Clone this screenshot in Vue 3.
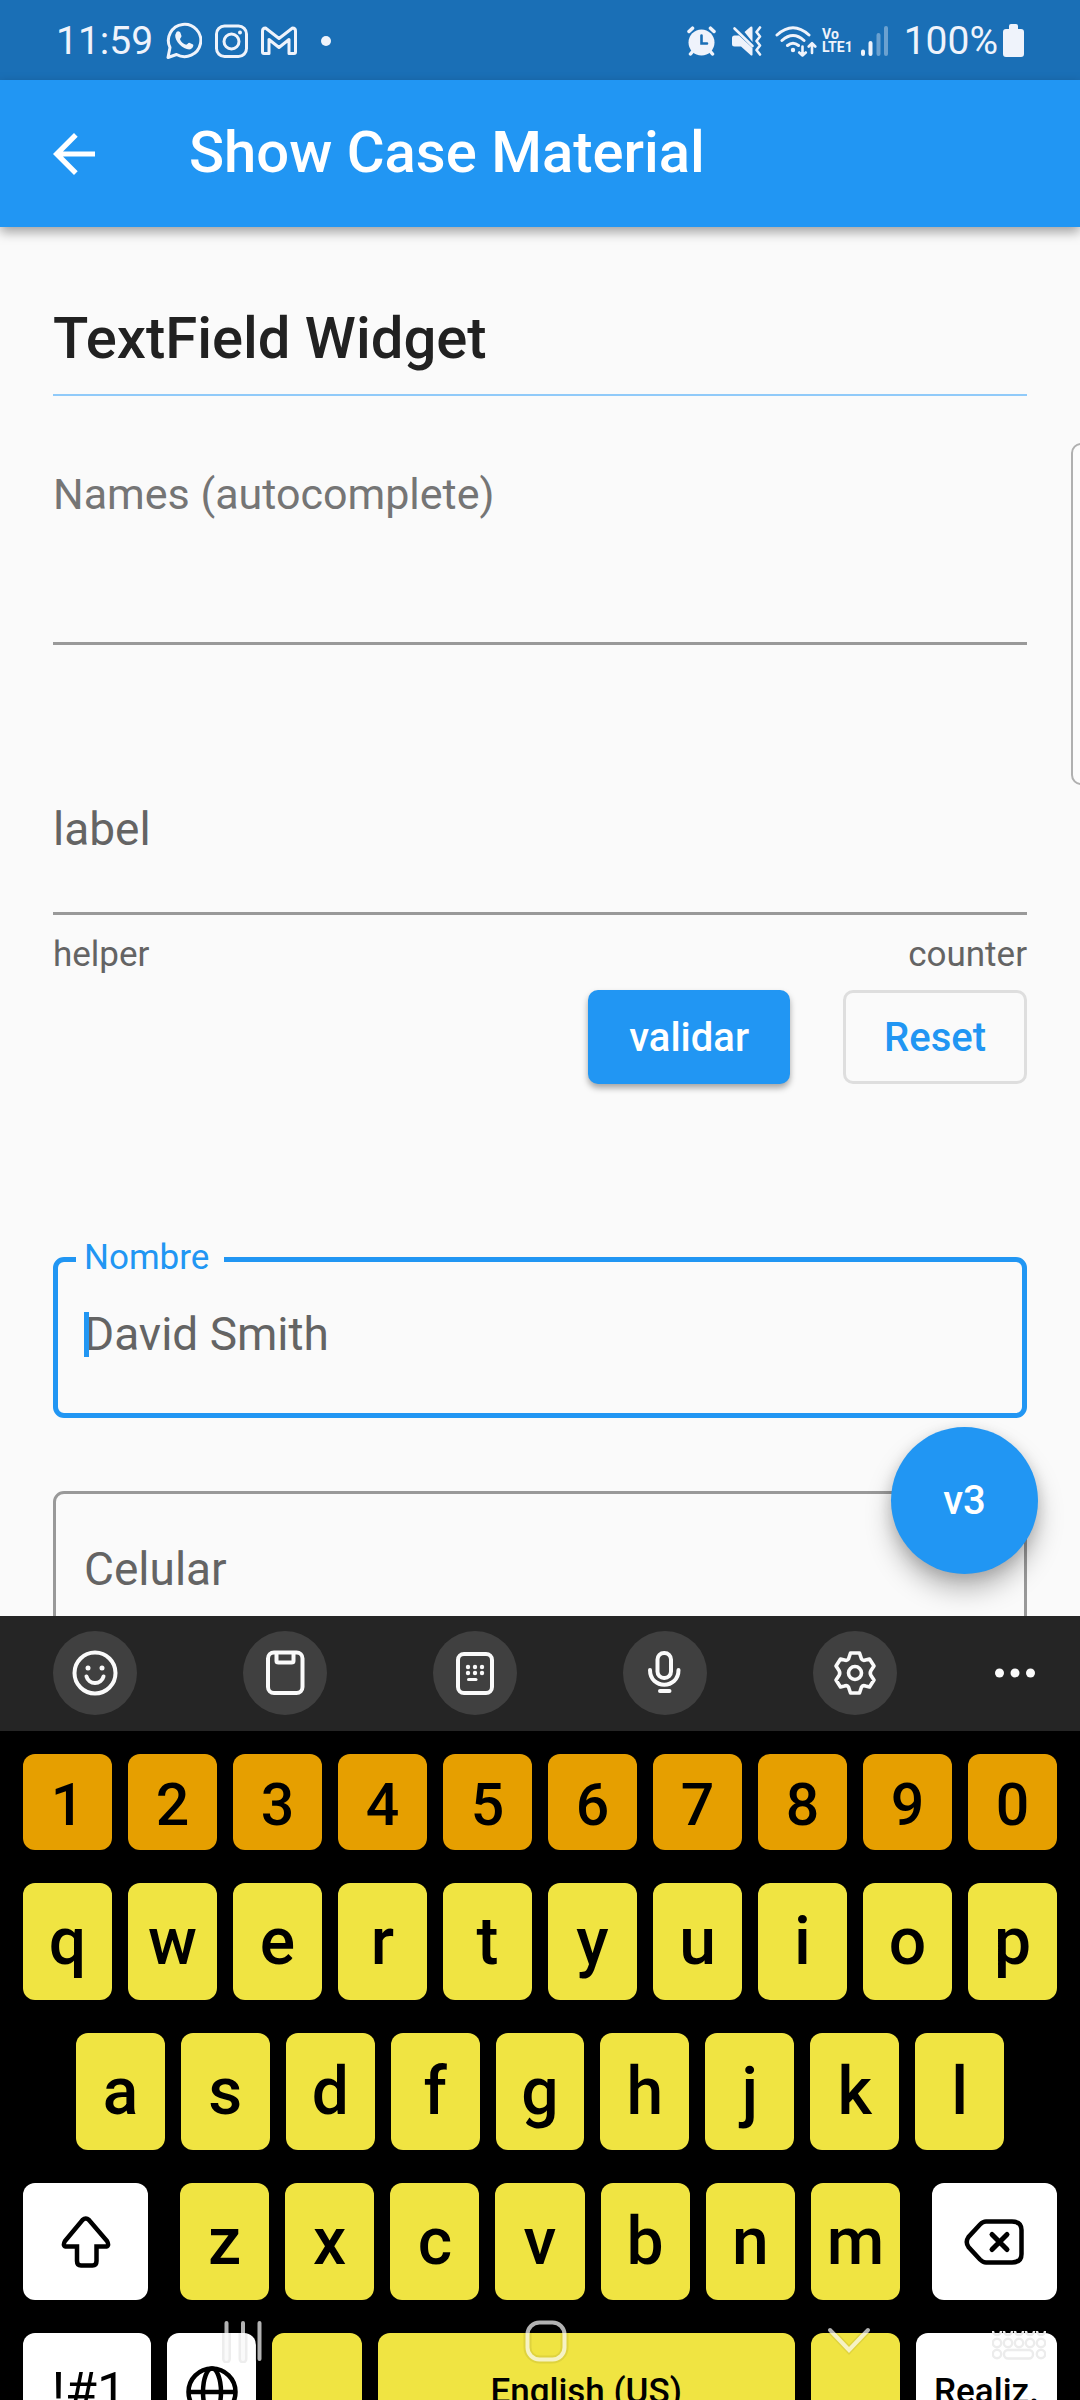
<script setup>
import { ref } from 'vue'

const names = ref('')
const plain = ref('')
const nombre = ref('')
const celular = ref('')

const digits = '1234567890'.split('')
const topRow = 'qwertyuiop'.split('')
const homeRow = 'asdfghjkl'.split('')
const bottomRow = 'zxcvbnm'.split('')
const keyDots = [16, 23, 30]
const navDots = [4, 15, 26, 37, 48]
</script>

<template>
  <div class="screen">
    <header class="status">
      <div class="status-side">
        <time class="status-text">11:59</time>
        <svg class="ml-m" width="36" height="38" viewBox="0 0 36 38" fill="none">
          <path d="M2 35.500 L4 25.500 A16.200 16.200 0 1 1 10.500 32.500 Z" stroke="#eff3fb" stroke-width="3" stroke-linejoin="round" />
          <path d="M10.500 10 C12 8.500 14 9.500 14.500 11 L15.500 14 C15.500 15.500 14 16 14 17.200 C15 20 17.500 22 20.200 22.800 C21.500 22.500 22 20.800 23.300 20.800 L27 22.600 C28 23.800 26.500 26.500 24.500 27.300 C18 28.500 8.500 19.500 9.200 13 Z" fill="#eff3fb" />
        </svg>
        <svg class="ml-m" width="33" height="34" viewBox="0 0 33 34" fill="none" stroke="#eff3fb" stroke-width="3">
          <rect x="1.500" y="2" width="30" height="30.500" rx="8" />
          <circle cx="16.500" cy="17.500" r="7.500" />
          <circle cx="25" cy="8.500" r="2" fill="#eff3fb" stroke="none" />
        </svg>
        <svg class="ml-m" width="36" height="30" viewBox="0 0 36 30" fill="none" stroke="#eff3fb" stroke-width="3" stroke-linejoin="round">
          <path d="M4.500 2 L18 12.500 L31.500 2 Q34.500 2 34.500 5 V26 Q34.500 27.500 33 27.500 H28 V13.500 L18 21.500 L8 13.500 V27.500 H3 Q1.500 27.500 1.500 26 V5 Q1.500 2 4.500 2 Z" />
        </svg>
        <span class="more-dot"></span>
      </div>
      <div class="status-side">
        <svg width="29" height="30" viewBox="0 0 29 30" fill="none" stroke="#eff3fb" stroke-linecap="round">
          <circle cx="14.500" cy="16.500" r="13" fill="#eff3fb" stroke="none" />
          <path d="M2 5.500 L5.500 2.200 M27 5.500 L23.500 2.200 M6 25 L3.500 28 M23 25 L25.500 28" stroke-width="3.500" />
          <path d="M14.500 9.500 V17.500 H20" stroke="#1a6fb6" stroke-width="2.600" />
        </svg>
        <svg class="ml-l" width="30" height="30" viewBox="0 0 30 30" fill="none">
          <path d="M0 12 Q0 9.500 2.500 9.500 H7 L20.500 22 V29 Q19.500 30 18.500 29 L9 20.500 H2.500 Q0 20.500 0 18 Z M12.500 6 L18.500 .800 Q20.500 0 20.500 2 V16 Z" fill="#eff3fb" />
          <path d="M2.500 2.500 L20.500 20" stroke="#eff3fb" stroke-width="2.600" stroke-linecap="round" />
          <path d="M28 1.500 L24.500 6 L28 10.500 L24.500 15 L28 19.500 L24.500 24 L28 28.500" stroke="#eff3fb" stroke-width="2.600" stroke-linecap="round" stroke-linejoin="round" />
        </svg>
        <svg class="ml-m" width="42" height="34" viewBox="0 0 42 34" fill="none" stroke="#eff3fb" stroke-width="3" stroke-linecap="round">
          <path d="M2 11 Q18 -3.500 34 11 M7 16.500 Q18 6.500 29 16.500 M12.500 21.500 Q18 17 23.500 21.500" />
          <circle cx="18" cy="26" r="2.200" fill="#eff3fb" stroke="none" />
          <path d="M27.500 22.500 V31 M24.200 28.500 L27.500 31.500 L30.800 28.500 M37 29 V20 M33.700 22.500 L37 19.200 L40.300 22.500" stroke-width="2.600" stroke-linejoin="round" />
        </svg>
        <span class="volte"><span>Vo</span><span>LTE1</span></span>
        <svg class="ml-s" width="27" height="30" viewBox="0 0 27 30" stroke="#eff3fb" stroke-width="4" stroke-linecap="round">
          <path d="M2 25.500 V28 M9.500 17 V28" />
          <path d="M17.500 9 V28 M25 2 V28" opacity=".38" />
        </svg>
        <span class="status-text ml-l">100%</span>
        <svg class="battery" width="21" height="34" viewBox="0 0 21 34">
          <path d="M6 2 Q6 0 8 0 H13 Q15 0 15 2 V5 H18 Q21 5 21 8 V30 Q21 33 18 33 H3 Q0 33 0 30 V8 Q0 5 3 5 H6 Z" fill="#eff3fb" />
        </svg>
      </div>
    </header>

    <div class="appbar">
      <button class="back" type="button" aria-label="Back">
        <svg width="42" height="42" viewBox="0 0 42 42" fill="#fff">
          <path d="M42 18.400 H10 L24.700 3.700 L21 0 L0 21 L21 42 L24.700 38.300 L10 23.600 H42 Z" />
        </svg>
      </button>
      <h1>Show Case Material</h1>
    </div>

    <main class="content">
      <h2>TextField Widget</h2>

      <div class="names">
        <label for="names">Names (autocomplete)</label>
        <input id="names" v-model="names" type="text" autocomplete="off" />
      </div>

      <div class="lined">
        <label for="plain">label</label>
        <input id="plain" v-model="plain" type="text" />
      </div>
      <div class="hints"><span>helper</span><span>counter</span></div>

      <div class="actions">
        <button class="btn filled" type="button">validar</button>
        <button class="btn outlined" type="button">Reset</button>
      </div>

      <div class="boxed active">
        <label for="nombre">Nombre</label>
        <input id="nombre" v-model="nombre" type="text" placeholder="David Smith" />
        <span class="caret"></span>
      </div>

      <div class="boxed idle">
        <label for="celular">Celular</label>
        <input id="celular" v-model="celular" type="tel" />
      </div>

      <button class="fab" type="button">v3</button>
      <span class="edge-handle"></span>
    </main>

    <section class="keyboard">
      <div class="tools">
        <button type="button" aria-label="Emoji">
          <svg width="46" height="46" viewBox="0 0 46 46" fill="none" stroke="#fafafa" stroke-width="4" stroke-linecap="round">
            <circle cx="23" cy="23" r="20.500" />
            <circle cx="16" cy="18" r="2.500" fill="#fafafa" stroke="none" />
            <circle cx="30" cy="18" r="2.500" fill="#fafafa" stroke="none" />
            <path d="M14.500 26.500 A8.800 8.800 0 0 0 31.500 26.500" />
          </svg>
        </button>
        <button type="button" aria-label="Clipboard">
          <svg width="46" height="46" viewBox="0 0 46 46" fill="none" stroke="#fafafa" stroke-width="4">
            <rect x="6" y="2.500" width="34.500" height="40.500" rx="6" />
            <path d="M14.500 3 V11 Q14.500 12.500 16.500 12.500 H29.500 Q31.500 12.500 31.500 11 V3" />
          </svg>
        </button>
        <button type="button" aria-label="Keyboard layout">
          <svg width="46" height="46" viewBox="0 0 46 46" fill="none" stroke="#fafafa">
            <rect x="6" y="4" width="34" height="39" rx="6" stroke-width="4" />
            <g v-for="x in keyDots" :key="x" fill="#fafafa" stroke="none">
              <circle :cx="x" cy="17" r="2.200" />
              <circle :cx="x" cy="23" r="2.200" />
            </g>
            <path d="M16.500 29.500 H24" stroke-width="3" stroke-linecap="round" />
          </svg>
        </button>
        <button type="button" aria-label="Voice input">
          <svg width="46" height="46" viewBox="0 0 46 46" fill="none" stroke="#fafafa" stroke-width="4" stroke-linecap="round">
            <rect x="15.500" y="3" width="13.500" height="25" rx="6.500" />
            <path d="M8 20 C8 39.500 36.500 39.500 36.500 20 M18 41 H27.500" />
          </svg>
        </button>
        <button type="button" aria-label="Settings">
          <svg width="46" height="46" viewBox="-23 -23 46 46" fill="none" stroke="#fafafa" stroke-width="3.600" stroke-linejoin="round">
            <path d="M-4.500 -20 H4.500 L6.500 -14 Q8 -12 10.500 -13 L14.500 -14 L19 -7 L16 -2.500 Q14.500 0 16 2.500 L19 7 L14.500 14 L10.500 13 Q8 12 6.500 14 L4.500 20 H-4.500 L-6.500 14 Q-8 12 -10.500 13 L-14.500 14 L-19 7 L-16 2.500 Q-14.500 0 -16 -2.500 L-19 -7 L-14.500 -14 L-10.500 -13 Q-8 -12 -6.500 -14 Z" />
            <circle r="6.500" />
          </svg>
        </button>
        <button class="overflow" type="button" aria-label="More">
          <svg width="40" height="10" viewBox="0 0 40 10" fill="#fafafa">
            <circle cx="4.500" cy="5" r="4.500" /><circle cx="20" cy="5" r="4.500" /><circle cx="35.500" cy="5" r="4.500" />
          </svg>
        </button>
      </div>

      <div class="keys">
        <div class="row">
          <button v-for="k in digits" :key="k" class="key digit" type="button">{{ k }}</button>
        </div>
        <div class="row">
          <button v-for="k in topRow" :key="k" class="key" type="button">{{ k }}</button>
        </div>
        <div class="row home">
          <button v-for="k in homeRow" :key="k" class="key" type="button">{{ k }}</button>
        </div>
        <div class="row">
          <button class="key fn shift" type="button" aria-label="Shift">
            <svg width="50" height="52" viewBox="0 0 50 52" fill="none" stroke="#000" stroke-width="4.500">
              <path d="M21.500 4 Q24.800 1 28 4 L46 25 Q49 30.500 44 30.500 H35.500 V45 Q35.500 49.500 31.500 49.500 H20 Q16 49.500 16 45 V30.500 H6 Q1 30.500 4 25 Z" />
            </svg>
          </button>
          <button v-for="k in bottomRow" :key="k" class="key" type="button">{{ k }}</button>
          <button class="key fn erase" type="button" aria-label="Backspace">
            <svg width="60" height="46" viewBox="0 0 60 46" fill="none" stroke="#000" stroke-width="4.500" stroke-linecap="round">
              <path d="M22 2.500 H48 Q57.500 2.500 57.500 11 V35 Q57.500 43.500 48 43.500 H22 Q19 43.500 16 40.500 L4.500 28 Q1 23 4.500 18 L16 5.500 Q19 2.500 22 2.500 Z" />
              <path d="M28 15.500 L43 30.500 M43 15.500 L28 30.500" stroke-width="5" />
            </svg>
          </button>
        </div>
        <div class="row">
          <button class="key fn symbols" type="button">!#1</button>
          <button class="key fn" type="button" aria-label="Language">
            <svg width="52" height="52" viewBox="0 0 52 52" fill="none" stroke="#000" stroke-width="4.500">
              <circle cx="26" cy="26" r="23.500" />
              <ellipse cx="26" cy="26" rx="9" ry="23.500" />
              <path d="M2.500 26 H49.500" />
            </svg>
          </button>
          <button class="key" type="button" aria-label="Comma"></button>
          <button class="key space" type="button">English (US)</button>
          <button class="key" type="button" aria-label="Period"></button>
          <button class="key fn enter" type="button">Realiz.</button>
        </div>
      </div>
    </section>

    <nav class="navbar">
      <button type="button" aria-label="Recents">
        <svg width="44" height="44" viewBox="0 0 44 44" stroke-linecap="round">
          <path d="M5.500 4 V40 M22 4 V40 M38.500 4 V40" stroke="#000" stroke-opacity=".07" stroke-width="9" />
          <path d="M5.500 4 V40 M22 4 V40 M38.500 4 V40" stroke="#fff" stroke-opacity=".7" stroke-width="4" />
        </svg>
      </button>
      <button type="button" aria-label="Home">
        <svg width="46" height="46" viewBox="0 0 46 46" fill="none">
          <rect x="4.500" y="4.500" width="37" height="37" rx="12" stroke="#000" stroke-opacity=".07" stroke-width="8" />
          <rect x="4.500" y="4.500" width="37" height="37" rx="12" stroke="#fff" stroke-opacity=".7" stroke-width="4" />
        </svg>
      </button>
      <button type="button" aria-label="Hide keyboard">
        <svg width="46" height="30" viewBox="0 0 46 30" fill="none" stroke-linecap="round">
          <path d="M4 4 L23 24 L42 4" stroke="#000" stroke-opacity=".07" stroke-width="7" />
          <path d="M4 4 L23 24 L42 4" stroke="#fff" stroke-opacity=".7" stroke-width="4" />
        </svg>
      </button>
      <button class="switcher" type="button" aria-label="Switch keyboard">
        <svg width="54" height="30" viewBox="-1 0 54 30" fill="none" stroke="#ececec" stroke-width="2.400">
          <g v-for="x in navDots" :key="x">
            <path :d="`M${x - 4} 1 A4 4 0 0 0 ${x + 4} 1`" />
            <circle :cx="x" cy="13" r="4.200" />
          </g>
          <circle cx="4" cy="24" r="4.200" />
          <rect x="11" y="20" width="29" height="8.500" rx="4" />
          <circle cx="48" cy="24" r="4.200" />
        </svg>
      </button>
    </nav>
  </div>
</template>

<style>
body {
  background: #fafafa;
}
</style>

<style scoped>
* {
  box-sizing: border-box;
}

.screen {
  position: relative;
  display: flex;
  flex-direction: column;
  height: 100vh;
  overflow: hidden;
  background: #fafafa;
  font-family: Roboto, "Liberation Sans", sans-serif;
}

button,
input {
  margin: 0;
  padding: 0;
  border: 0;
  background: none;
  font-family: inherit;
  outline: none;
}

svg {
  display: block;
  flex: none;
}

h1,
h2 {
  margin: 0;
  font-size: 58px;
  font-weight: 500;
  line-height: 68px;
}

/* status bar */
.status {
  display: flex;
  flex: none;
  justify-content: space-between;
  height: 80px;
  padding: 2px 56px 0;
  background: #1a6fb6;
  color: #eff3fb;
}

.status-side {
  display: flex;
  align-items: center;
}

.status-text {
  font-size: 39px;
  line-height: 46px;
}

.ml-s {
  margin-left: 8px;
}

.ml-m {
  margin-left: 13px;
}

.ml-l {
  margin-left: 16px;
}

.more-dot {
  width: 10px;
  height: 10px;
  margin-left: 24px;
  border-radius: 50%;
  background: #eff3fb;
}

.volte {
  display: flex;
  flex-direction: column;
  margin-left: 5px;
  font-size: 14px;
  font-weight: 700;
  line-height: 13px;
}

.battery {
  margin-left: 5px;
}

/* app bar */
.appbar {
  position: relative;
  z-index: 1;
  display: flex;
  flex: none;
  align-items: center;
  height: 147px;
  padding: 0 53px;
  background: #2196f3;
  color: #fff;
  box-shadow: 0 5px 11px rgba(0, 0, 0, 0.36);
}

.back {
  margin-right: 94px;
}

h1 {
  padding-bottom: 4px;
}

/* form */
.content {
  position: relative;
  flex: 1 1 0;
  min-height: 0;
  padding: 77px 53px 0;
  overflow: hidden;
}

h2 {
  padding-bottom: 22px;
  border-bottom: 2px solid #90caf9;
  color: #212121;
}

.names {
  display: flex;
  flex-direction: column;
  margin-top: 73px;
  color: #757575;
  font-size: 43px;
  line-height: 50px;
}

.names input {
  height: 126px;
  border-bottom: 3px solid #999;
  font-size: 46px;
}

.lined {
  display: grid;
  margin-top: 102px;
}

.lined label,
.lined input {
  grid-area: 1 / 1;
}

.lined label {
  padding-top: 55px;
  color: #646464;
  font-size: 46px;
  line-height: 54px;
}

.lined input {
  height: 168px;
  border-bottom: 3px solid #999;
  font-size: 46px;
}

.hints {
  display: flex;
  justify-content: space-between;
  margin-top: 19px;
  color: #646464;
  font-size: 35px;
  line-height: 42px;
}

.actions {
  display: flex;
  justify-content: flex-end;
  gap: 53px;
  margin-top: 14px;
}

.btn {
  height: 94px;
  padding: 0 41px;
  border-radius: 10px;
  font-size: 40px;
  font-weight: 500;
}

.filled {
  background: #2196f3;
  color: #fff;
  box-shadow: 0 4px 6px rgba(0, 0, 0, 0.34);
}

.outlined {
  padding: 0 38px;
  border: 3px solid #dedede;
  color: #2196f3;
}

.boxed {
  position: relative;
  display: grid;
  height: 161px;
  border-radius: 11px;
  font-size: 46px;
}

.boxed input {
  width: 100%;
  padding: 0 26px 8px;
  font-size: 46px;
}

.active {
  margin-top: 173px;
  border: 5px solid #2196f3;
}

.active label {
  position: absolute;
  top: -25px;
  left: 18px;
  padding: 0 15px 0 8px;
  background: #fafafa;
  color: #2196f3;
  font-size: 35px;
  line-height: 42px;
}

.active input::placeholder {
  color: #646464;
  opacity: 1;
}

.caret {
  position: absolute;
  top: 50px;
  left: 26px;
  width: 5px;
  height: 45px;
  background: #2196f3;
}

.idle {
  margin-top: 73px;
  border: 3px solid #999;
}

.idle label,
.idle input {
  grid-area: 1 / 1;
}

.idle label {
  align-self: center;
  padding: 0 28px 6px;
  color: #646464;
  line-height: 54px;
}

.fab {
  position: absolute;
  right: 42px;
  bottom: 42px;
  width: 147px;
  height: 147px;
  border-radius: 50%;
  background: #2196f3;
  color: #fff;
  font-size: 40px;
  font-weight: 500;
  box-shadow: 0 16px 26px rgba(0, 0, 0, 0.26), 0 4px 14px rgba(0, 0, 0, 0.14);
}

.edge-handle {
  position: absolute;
  top: 216px;
  right: -11px;
  width: 20px;
  height: 342px;
  border: 2px solid #b0b0b0;
  border-radius: 14px;
  background: #fcfcfc;
}

/* keyboard: its last row runs past the bottom edge of the screen */
.keyboard {
  flex: none;
  margin-bottom: -50px;
  background: #000;
}

.tools {
  display: flex;
  align-items: center;
  gap: 106px;
  height: 115px;
  padding: 0 0 2px 53px;
  background: #252525;
}

.tools button {
  display: flex;
  flex: none;
  align-items: center;
  justify-content: center;
  width: 84px;
  height: 84px;
  border-radius: 50%;
  background: #404040;
}

.tools .overflow {
  width: 44px;
  margin-left: -10px;
  background: none;
}

.keys {
  display: flex;
  flex-direction: column;
  gap: 33px;
  padding: 23px 23px 0;
}

.row {
  display: flex;
  gap: 16px;
}

.home {
  padding: 0 53px;
}

.key {
  display: flex;
  flex: 1 1 0;
  align-items: center;
  justify-content: center;
  height: 117px;
  border-radius: 12px;
  background: #f0e442;
  color: #000;
  font-size: 66px;
  font-weight: 500;
  white-space: nowrap;
}

.digit {
  height: 96px;
  padding-top: 4px;
  background: #e69f00;
  font-size: 59px;
}

.fn {
  background: #fff;
}

.shift,
.erase {
  flex: 0 0 125px;
}

.shift {
  margin-right: 16px;
}

.erase {
  margin-left: 16px;
}

.symbols {
  flex: 0 0 128px;
  padding-left: 4px;
  font-size: 52px;
  font-weight: 400;
}

.space {
  flex: 0 0 417px;
  font-size: 35px;
}

.enter {
  flex: 0 0 141px;
  font-size: 35px;
}

/* system navigation, drawn over the keyboard */
.navbar {
  position: absolute;
  right: 0;
  bottom: 0;
  left: 0;
  display: flex;
  height: 118px;
  padding: 0 21px 0 92px;
}

.navbar button {
  display: flex;
  flex: 1 1 0;
  align-items: center;
  justify-content: center;
}

.navbar .switcher {
  flex: 0 0 80px;
  margin-left: -21px;
  padding-top: 8px;
}
</style>
